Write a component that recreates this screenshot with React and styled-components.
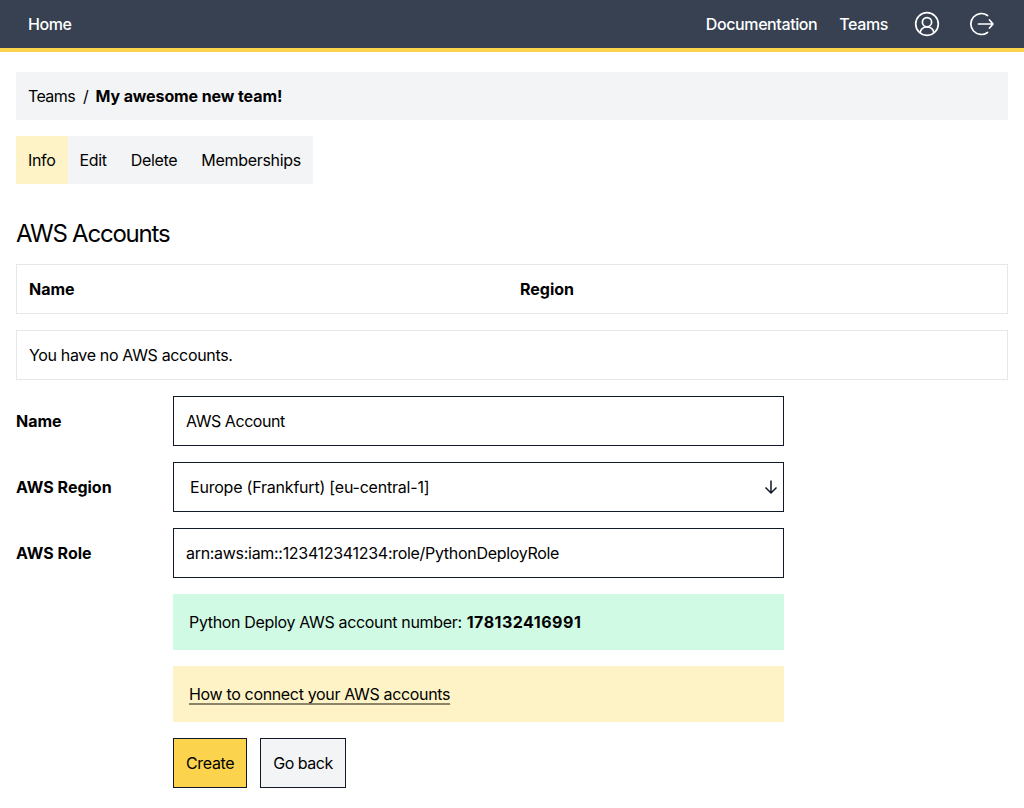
import React from "react";
import styled, { createGlobalStyle } from "styled-components";

const Global = createGlobalStyle`
  * { box-sizing: border-box; }
  html, body { margin: 0; padding: 0; background: #fff; }
  body { font-family: Inter, "Liberation Sans", sans-serif; font-size: 16px; line-height: 24px; color: #000; letter-spacing: -0.34px; }
`;

const Nav = styled.nav`
  height: 52px;
  background: #374151;
  border-bottom: 4px solid #fcd34d;
  display: flex;
  align-items: center;
  justify-content: space-between;
  padding: 0 30px 0 28px;
  color: #fff;
  font-weight: 500;
  letter-spacing: -0.4px;
`;
const NavGroup = styled.div`
  display: flex;
  align-items: center;
`;
const NavLink = styled.a`
  color: #fff;
  margin-right: ${(p) => p.$gap || 0}px;
`;
const IconLink = styled.a`
  display: flex;
  color: #fff;
  margin-right: ${(p) => p.$gap || 0}px;
`;
const Main = styled.main`
  padding: 20px 16px 0;
  display: flex;
  flex-direction: column;
`;
const Breadcrumb = styled.div`
  height: 48px;
  background: #f3f4f6;
  display: flex;
  align-items: center;
  padding: 0 12px;
  margin-bottom: 16px;
`;
const Crumb = styled.span`
  letter-spacing: -0.6px;
`;
const Sep = styled.span`
  margin: 0 7px 0 8px;
`;
const CrumbCurrent = styled.strong`
  letter-spacing: -0.1px;
`;
const Tabs = styled.div`
  display: flex;
  align-self: flex-start;
  background: #f3f4f6;
  margin-bottom: 32px;
  letter-spacing: -0.32px;
`;
const Tab = styled.a`
  padding: 12px;
  background: ${(p) => (p.$active ? "#fef3c7" : "transparent")};
`;
const Heading = styled.h2`
  margin: 2px 0 14px;
  font-size: 24px;
  line-height: 32px;
  font-weight: 400;
  letter-spacing: -1.22px;
`;
const Row = styled.div`
  border: 1px solid #e5e7eb;
  height: 50px;
  padding: 0 12px;
  display: flex;
  align-items: center;
  margin-bottom: 16px;
`;
const Col = styled.div`
  flex: none;
  width: 491px;
  font-weight: 700;
  letter-spacing: 0;
`;
const Field = styled.div`
  display: flex;
  align-items: center;
  margin-bottom: 16px;
`;
const Label = styled.label`
  width: 157px;
  font-weight: 700;
  letter-spacing: 0;
`;
const Control = styled.div`
  width: 611px;
  height: 50px;
  border: 1px solid #111827;
  display: flex;
  align-items: center;
  justify-content: space-between;
  padding: ${(p) => (p.$select ? "0 4px 0 16px" : "0 12px")};
  letter-spacing: ${(p) => p.$tracking}px;
`;
const Offset = styled.div`
  margin-left: 157px;
  width: 611px;
  margin-bottom: 16px;
`;
const Notice = styled.div`
  height: 56px;
  padding: 0 16px;
  display: flex;
  align-items: center;
  background: ${(p) => p.$bg};
`;
const AccountNumber = styled.strong`
  letter-spacing: 0.5px;
  margin-left: 5px;
`;
const NoticeLink = styled.a`
  text-decoration: underline;
  text-decoration-thickness: 2px;
  text-decoration-color: #8a8468;
  text-underline-offset: 3px;
`;
const Buttons = styled.div`
  margin-left: 157px;
  display: flex;
  gap: 13px;
`;
const Button = styled.button`
  height: 50px;
  padding: 0 12px;
  font: inherit;
  letter-spacing: ${(p) => p.$tracking}px;
  color: #000;
  border: 1px solid #111827;
  background: ${(p) => p.$bg};
`;

const UserIcon = () => (
  <svg width="26" height="26" viewBox="0 0 26 26" fill="none" stroke="currentColor" strokeWidth="1.7" strokeLinecap="round" strokeLinejoin="round">
    <circle cx="13" cy="13" r="11.3" />
    <circle cx="13" cy="11.200" r="4.600" />
    <path d="M6 21.500c.8-3.300 3.500-5.500 7-5.500s6.200 2.200 7 5.500" />
  </svg>
);
const LogoutIcon = () => (
  <svg width="24" height="24" viewBox="0 0 24 24" fill="none" stroke="currentColor" strokeWidth="1.7" strokeLinecap="round" strokeLinejoin="round">
    <path d="M17.500 3.500A10.500 10.500 0 1 0 17.500 20.500" />
    <path d="M8.500 12H23M19.500 8 23 12l-3.500 4" />
  </svg>
);
const ArrowIcon = () => (
  <svg width="16" height="16" viewBox="0 0 16 16" fill="none" stroke="#111827" strokeWidth="1.5">
    <path d="M8 1.500v12M2.500 8.500 8 14l5.500-5.500" />
  </svg>
);

export default function App() {
  return (
    <>
      <Global />
      <Nav>
        <NavGroup>
          <NavLink>Home</NavLink>
        </NavGroup>
        <NavGroup>
          <NavLink $gap={22}>Documentation</NavLink>
          <NavLink $gap={26}>Teams</NavLink>
          <IconLink $gap={30}><UserIcon /></IconLink>
          <IconLink><LogoutIcon /></IconLink>
        </NavGroup>
      </Nav>
      <Main>
        <Breadcrumb>
          <Crumb>Teams</Crumb>
          <Sep>/</Sep>
          <CrumbCurrent>My awesome new team!</CrumbCurrent>
        </Breadcrumb>
        <Tabs>
          <Tab $active>Info</Tab>
          <Tab>Edit</Tab>
          <Tab>Delete</Tab>
          <Tab>Memberships</Tab>
        </Tabs>
        <Heading>AWS Accounts</Heading>
        <Row>
          <Col>Name</Col>
          <Col>Region</Col>
        </Row>
        <Row>You have no AWS accounts.</Row>
        <Field>
          <Label>Name</Label>
          <Control $tracking={-0.45}>AWS Account</Control>
        </Field>
        <Field>
          <Label>AWS Region</Label>
          <Control $select $tracking={-0.21}>
            <span>Europe (Frankfurt) [eu-central-1]</span>
            <ArrowIcon />
          </Control>
        </Field>
        <Field>
          <Label>AWS Role</Label>
          <Control $tracking={-0.3}>arn:aws:iam::123412341234:role/PythonDeployRole</Control>
        </Field>
        <Offset>
          <Notice $bg="#d1fae5">
            <span>Python Deploy AWS account number:<AccountNumber>178132416991</AccountNumber></span>
          </Notice>
        </Offset>
        <Offset>
          <Notice $bg="#fef3c7">
            <NoticeLink>How to connect your AWS accounts</NoticeLink>
          </Notice>
        </Offset>
        <Buttons>
          <Button $bg="#fcd34d" $tracking={-0.34}>Create</Button>
          <Button $bg="#f3f4f6" $tracking={-0.5}>Go back</Button>
        </Buttons>
      </Main>
    </>
  );
}
